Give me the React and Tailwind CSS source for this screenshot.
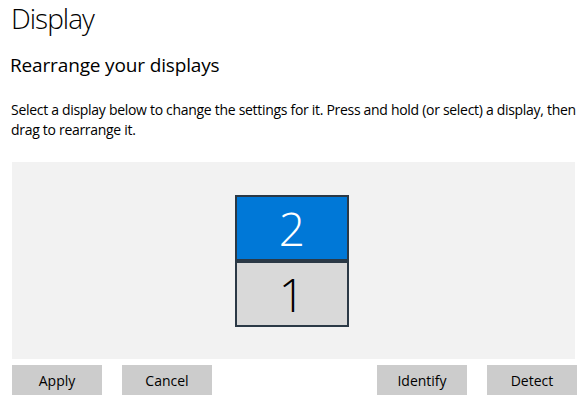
import React from 'react'

const Monitor = ({ num, active }) => (
  <div
    className={`w-[114px] h-[66px] border-2 border-[#2b3946] flex items-center justify-center ${
      active ? 'bg-[#0078d7] text-white' : 'bg-[#d9d9d9] text-black'
    }`}
  >
    <span className="text-[46px] font-light leading-none">{num}</span>
  </div>
)

const Button = ({ children }) => (
  <button className="w-[90px] h-[30px] bg-[#cccccc] text-[14px] text-black flex items-center justify-center">
    {children}
  </button>
)

export default function App() {
  return (
    <div
      className="w-[586px] h-[404px] bg-white overflow-hidden text-black"
      style={{ fontFamily: '"Open Sans", "Noto Sans", sans-serif' }}
    >
      <h1 className="pl-[11px] text-[28px] font-light leading-[36px] tracking-[-1px]">Display</h1>
      <h2 className="pl-[10px] mt-[15px] text-[19px] leading-[28px] tracking-[-0.15px]">Rearrange your displays</h2>
      <p className="pl-[11px] mt-[21px] text-[14px] leading-[20px] whitespace-nowrap tracking-[-0.3px]">
        Select a display below to change the settings for it. Press and hold (or select) a display, then
        <br />
        drag to rearrange it.
      </p>

      {/* Arrangement canvas */}
      <div className="mt-[22px] ml-[12px] w-[563px] h-[197px] pr-[3px] bg-[#f2f2f2] flex flex-col items-center justify-center">
        <div className="flex flex-col">
          <Monitor num="2" active />
          <Monitor num="1" />
        </div>
      </div>

      {/* Actions */}
      <div className="mt-[6px] pl-[12px] pr-[9px] flex items-center">
        <Button>Apply</Button>
        <div className="ml-[20px]">
          <Button>Cancel</Button>
        </div>
        <div className="ml-auto flex gap-[20px]">
          <Button>Identify</Button>
          <Button>Detect</Button>
        </div>
      </div>
    </div>
  )
}
